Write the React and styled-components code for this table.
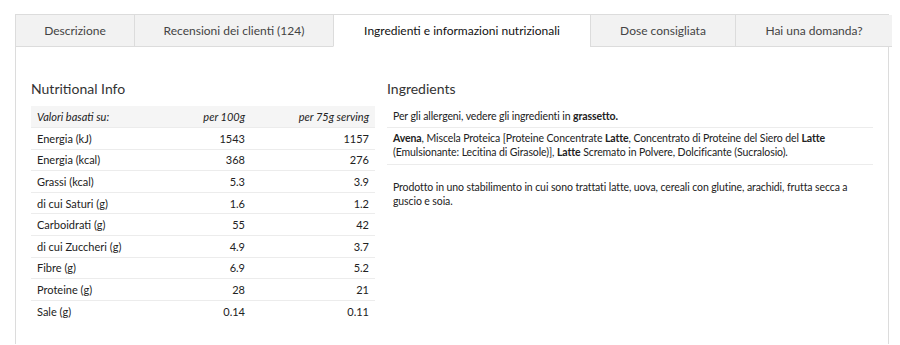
import React from "react";
import styled, { createGlobalStyle } from "styled-components";

const GlobalStyle = createGlobalStyle`
  body {
    margin: 0;
    background: #fff;
    font-family: Lato, "Open Sans", sans-serif;
    color: #333;
  }
`;

const Page = styled.div`
  padding: 14px 12px 0 15px;
  width: 874px;
`;

const TabBar = styled.div`
  display: flex;
  border: 1px solid #dcdcdc;
  border-bottom: none;
  background: #f2f2f2;
`;

const Tab = styled.div`
  flex: 0 0 ${(p) => p.$w}px;
  height: 31px;
  display: flex;
  align-items: center;
  justify-content: center;
  font-size: 12px;
  color: ${(p) => (p.$active ? "#111" : "#444")};
  background: ${(p) => (p.$active ? "#fff" : "#f2f2f2")};
  border-left: ${(p) => (p.$first ? "none" : "1px solid #dcdcdc")};
  border-bottom: 1px solid ${(p) => (p.$active ? "#fff" : "#dcdcdc")};
`;

const Panel = styled.div`
  border: 1px solid #dcdcdc;
  border-top: none;
  border-bottom: none;
  height: 265px;
  display: grid;
  grid-template-columns: 344px 486px;
  column-gap: 12px;
  padding: 32px 0 0 15px;
`;

const Heading = styled.h3`
  margin: 0 0 7px;
  font-size: 14px;
  font-weight: 400;
  color: #333;
  line-height: 20px;
`;

const Table = styled.table`
  width: 100%;
  border-collapse: collapse;
  font-size: 11px;
`;

const Row = styled.tr`
  height: 21.6px;
  background: ${(p) => (p.$head ? "#f5f5f5" : "transparent")};
  border-bottom: ${(p) => (p.$last ? "none" : "1px solid #ececec")};
  font-style: ${(p) => (p.$head ? "italic" : "normal")};
`;

const Cell = styled.td`
  padding: 0 6px;
  text-align: ${(p) => (p.$right ? "right" : "left")};
  width: ${(p) => p.$w || "auto"};
  color: #222;
  white-space: nowrap;
`;

const IngList = styled.div`
  font-size: 10.5px;
  letter-spacing: -0.1px;
  line-height: 14px;
  color: #222;
`;

const IngRow = styled.div`
  padding: ${(p) => p.$pad || "3px 6px 4px"};
  border-bottom: 1px solid #ececec;
`;

const Note = styled.p`
  margin: 15px 0 0;
  padding: 0 6px;
  font-size: 10.5px;
  letter-spacing: -0.1px;
  line-height: 14px;
  color: #222;
`;

const tabs = [
  { label: "Descrizione", w: 118 },
  { label: "Recensioni dei clienti (124)", w: 198 },
  { label: "Ingredienti e informazioni nutrizionali", w: 256, active: true },
  { label: "Dose consigliata", w: 144 },
  { label: "Hai una domanda?", w: 156 },
];

const rows = [
  ["Energia (kJ)", "1543", "1157"],
  ["Energia (kcal)", "368", "276"],
  ["Grassi (kcal)", "5.3", "3.9"],
  ["di cui Saturi (g)", "1.6", "1.2"],
  ["Carboidrati (g)", "55", "42"],
  ["di cui Zuccheri (g)", "4.9", "3.7"],
  ["Fibre (g)", "6.9", "5.2"],
  ["Proteine (g)", "28", "21"],
  ["Sale (g)", "0.14", "0.11"],
];

export default function App() {
  return (
    <Page>
      <GlobalStyle />
      <TabBar>
        {tabs.map((t, i) => (
          <Tab key={t.label} $w={t.w} $active={t.active} $first={i === 0}>
            {t.label}
          </Tab>
        ))}
      </TabBar>
      <Panel>
        <div>
          <Heading>Nutritional Info</Heading>
          <Table>
            <tbody>
              <Row $head>
                <Cell $w="108px">Valori basati su:</Cell>
                <Cell $right>per 100g</Cell>
                <Cell $right $w="112px">per 75g serving</Cell>
              </Row>
              {rows.map((r, i) => (
                <Row key={r[0]} $last={i === rows.length - 1}>
                  <Cell>{r[0]}</Cell>
                  <Cell $right>{r[1]}</Cell>
                  <Cell $right>{r[2]}</Cell>
                </Row>
              ))}
            </tbody>
          </Table>
        </div>
        <div>
          <Heading>Ingredients</Heading>
          <IngList>
            <IngRow>
              Per gli allergeni, vedere gli ingredienti in <b>grassetto.</b>
            </IngRow>
            <IngRow $pad="3px 6px 5px">
              <b>Avena</b>, Miscela Proteica [Proteine Concentrate <b>Latte</b>,
              Concentrato di Proteine del Siero del <b>Latte</b> (Emulsionante:
              Lecitina di Girasole)], <b>Latte</b> Scremato in Polvere,
              Dolcificante (Sucralosio).
            </IngRow>
          </IngList>
          <Note>
            Prodotto in uno stabilimento in cui sono trattati latte, uova,
            cereali con glutine, arachidi, frutta secca a guscio e soia.
          </Note>
        </div>
      </Panel>
    </Page>
  );
}
